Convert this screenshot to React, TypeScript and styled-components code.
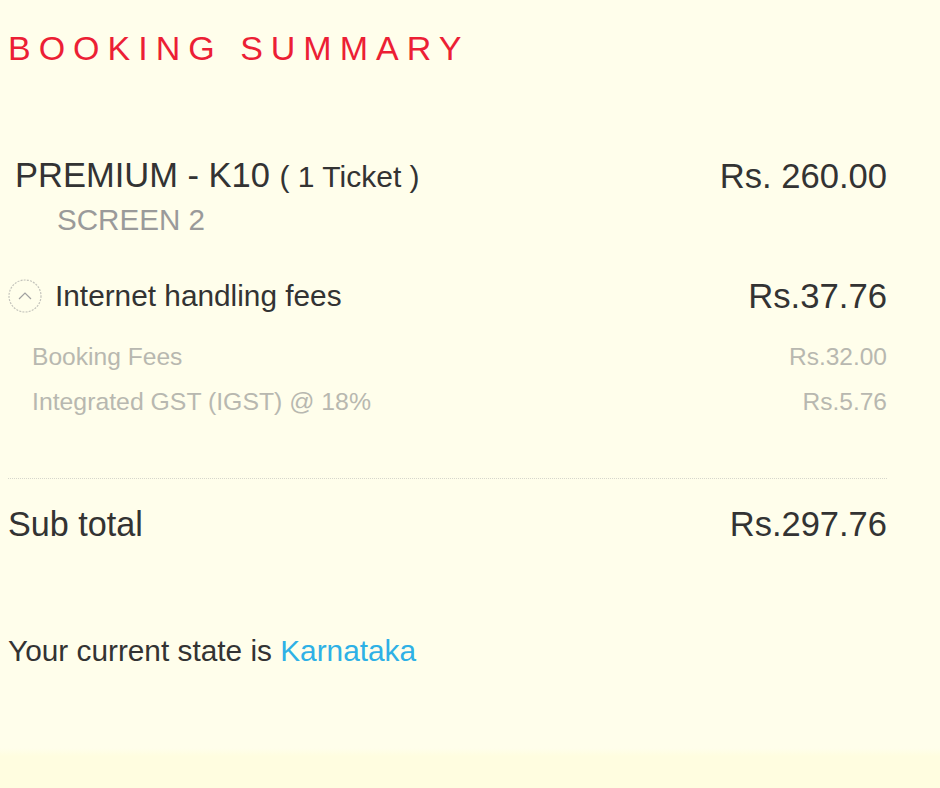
import React from "react";
import styled, { createGlobalStyle } from "styled-components";

const Global = createGlobalStyle`
  html, body { margin: 0; padding: 0; }
  body {
    background: linear-gradient(to bottom, #fffeeb 0px, #fffeeb 748px, #fffde0 756px, #fffde0 100%);
    min-height: 788px;
    font-family: "Liberation Sans", Arial, sans-serif;
    color: #333;
  }
`;

const Panel = styled.div`
  width: 879px;
  padding: 28px 0 0 8px;
  box-sizing: content-box;
`;

const Title = styled.h2`
  margin: 0;
  font-size: 34px;
  line-height: 40px;
  font-weight: normal;
  letter-spacing: 8px;
  color: #ec1f35;
`;

const Row = styled.div<{ $top: number; $lh: number; $indent?: number }>`
  display: flex;
  align-items: center;
  justify-content: space-between;
  margin-top: ${(p) => p.$top}px;
  padding-left: ${(p) => p.$indent ?? 0}px;
  line-height: ${(p) => p.$lh}px;
`;

const Label = styled.span<{ $size: number; $color?: string }>`
  font-size: ${(p) => p.$size}px;
  color: ${(p) => p.$color ?? "#333"};
`;

const Small = styled.span`
  font-size: 30px;
`;

const Amount = styled.span<{ $size: number; $color?: string }>`
  font-size: ${(p) => p.$size}px;
  color: ${(p) => p.$color ?? "#333"};
`;

const FeeToggle = styled.div`
  display: flex;
  align-items: center;
  gap: 13px;
`;

const Divider = styled.hr`
  margin: 61px 0 0;
  border: none;
  border-top: 1px dotted #d6d6cc;
  height: 0;
`;

const State = styled.p`
  margin: 90px 0 0;
  font-size: 29.8px;
  line-height: 34px;
  color: #333;
`;

const StateName = styled.span`
  color: #2eb1e6;
`;

const ChevronCircle = () => (
  <svg width="34" height="34" viewBox="0 0 34 34" aria-hidden="true">
    <circle cx="17" cy="17" r="16" fill="none" stroke="#c4c4bc" strokeWidth="1.2" strokeDasharray="2 1.2" />
    <polyline points="11,20 17,14 23,20" fill="none" stroke="#a0a0a0" strokeWidth="1.2" />
  </svg>
);

export default function App() {
  return (
    <>
      <Global />
      <Panel>
        <Title>BOOKING SUMMARY</Title>
        <Row $top={87} $lh={40} $indent={7}>
          <Label $size={34.5}>
            PREMIUM - K10 <Small>( 1 Ticket )</Small>
          </Label>
          <Amount $size={34.6}>Rs. 260.00</Amount>
        </Row>
        <Row $top={6} $lh={34} $indent={49}>
          <Label $size={29.6} $color="#9a9a9a">SCREEN 2</Label>
        </Row>
        <Row $top={39} $lh={40}>
          <FeeToggle>
            <ChevronCircle />
            <Label $size={29.8}>Internet handling fees</Label>
          </FeeToggle>
          <Amount $size={34.7}>Rs.37.76</Amount>
        </Row>
        <Row $top={26} $lh={30} $indent={24}>
          <Label $size={24.6} $color="#b8b8b0">Booking Fees</Label>
          <Amount $size={24.5} $color="#b8b8b0">Rs.32.00</Amount>
        </Row>
        <Row $top={15} $lh={30} $indent={24}>
          <Label $size={24.8} $color="#b8b8b0">Integrated GST (IGST) @ 18%</Label>
          <Amount $size={24.5} $color="#b8b8b0">Rs.5.76</Amount>
        </Row>
        <Divider />
        <Row $top={25} $lh={40}>
          <Label $size={34.2}>Sub total</Label>
          <Amount $size={34.5}>Rs.297.76</Amount>
        </Row>
        <State>
          Your current state is <StateName>Karnataka</StateName>
        </State>
      </Panel>
    </>
  );
}
